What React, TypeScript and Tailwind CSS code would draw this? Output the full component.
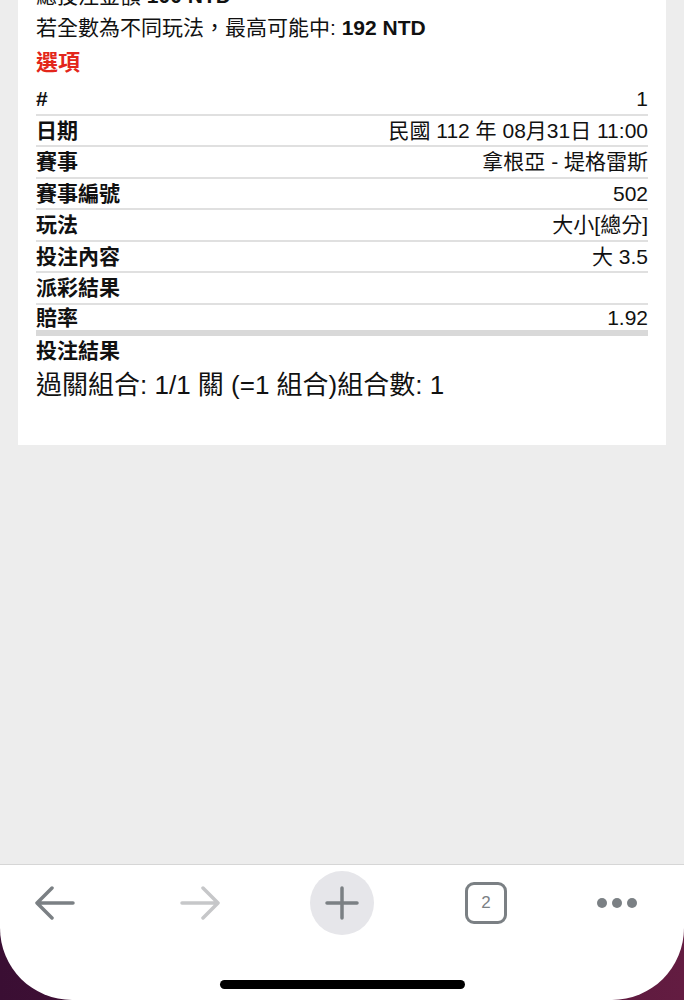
import React from "react"

const font = { fontFamily: '"Liberation Sans", "Noto Sans CJK TC", sans-serif' }

const rows: [string, string][] = [
  ["#", "1"],
  ["日期", "民國 112 年 08月31日 11:00"],
  ["賽事", "拿根亞 - 堤格雷斯"],
  ["賽事編號", "502"],
  ["玩法", "大小[總分]"],
  ["投注內容", "大 3.5"],
  ["派彩結果", ""],
]

function Toolbar() {
  return (
    <div className="bg-gradient-to-r from-[#3a0e33] to-[#631c41]">
      <div className="h-[136px] rounded-b-[72px] border-t border-[#d6d6d6] bg-white">
        <div className="flex h-[76px] items-center pl-[35px]">
          <svg width="40" height="34" viewBox="0 0 40 34" fill="none" stroke="#7b8084" strokeWidth="3.5" strokeLinecap="round" strokeLinejoin="round">
            <path d="M38 17H3M17 2L2 17l15 15" />
          </svg>
          <svg className="ml-[105px]" width="40" height="34" viewBox="0 0 40 34" fill="none" stroke="#c6c7c9" strokeWidth="3.5" strokeLinecap="round" strokeLinejoin="round">
            <path d="M2 17h35M23 2l15 15-15 15" />
          </svg>
          <div className="ml-[90px] flex h-[64px] w-[64px] items-center justify-center rounded-full bg-[#e6e6ea]">
            <svg width="34" height="34" viewBox="0 0 34 34" fill="none" stroke="#7b8084" strokeWidth="3.5" strokeLinecap="round">
              <path d="M17 2v30M2 17h30" />
            </svg>
          </div>
          <div className="ml-[91px] flex h-[42px] w-[42px] items-center justify-center rounded-[9px] border-[3px] border-[#7b8084] text-[17px] font-medium text-[#7b8084]">
            2
          </div>
          <div className="ml-[90px] flex gap-[5px]">
            <span className="h-[10px] w-[10px] rounded-full bg-[#7b8084]" />
            <span className="h-[10px] w-[10px] rounded-full bg-[#7b8084]" />
            <span className="h-[10px] w-[10px] rounded-full bg-[#7b8084]" />
          </div>
        </div>
        <div className="mt-[39px] flex justify-center">
          <div className="h-[9px] w-[245px] rounded-full bg-black" />
        </div>
      </div>
    </div>
  )
}

export default function App() {
  return (
    <div className="flex h-[1000px] flex-col overflow-hidden bg-[#ededed] text-[#111]" style={font}>
      <div className="mx-[18px] mt-[-20px] h-[465px] bg-white px-[18px]">
        <div className="text-[21px] leading-[32px]">
          總投注金額 <b>100 NTD</b>
        </div>
        <div className="text-[21px] leading-[32px]">
          若全數為不同玩法，最高可能中: <b>192 NTD</b>
        </div>
        <div className="mt-[4px] text-[22px] font-bold leading-[30px] text-[#e3261b]">選項</div>
        <div className="mt-[6px]">
          {rows.map(([label, value]) => (
            <div key={label} className="flex h-[31.5px] items-center justify-between border-b-2 border-[#e0e0e0] text-[21px]">
              <span className="font-bold">{label}</span>
              <span>{value}</span>
            </div>
          ))}
          <div className="flex h-[31.5px] items-center justify-between border-b-[6px] border-[#d9d9d9] text-[21px]">
            <span className="font-bold">賠率</span>
            <span>1.92</span>
          </div>
        </div>
        <div className="text-[21px] font-bold leading-[30px]">投注結果</div>
        <div className="mt-[2px] text-[26px] leading-[34px]">過關組合: 1/1 關 (=1 組合)組合數: 1</div>
      </div>
      <div className="flex-1" />
      <Toolbar />
    </div>
  )
}
